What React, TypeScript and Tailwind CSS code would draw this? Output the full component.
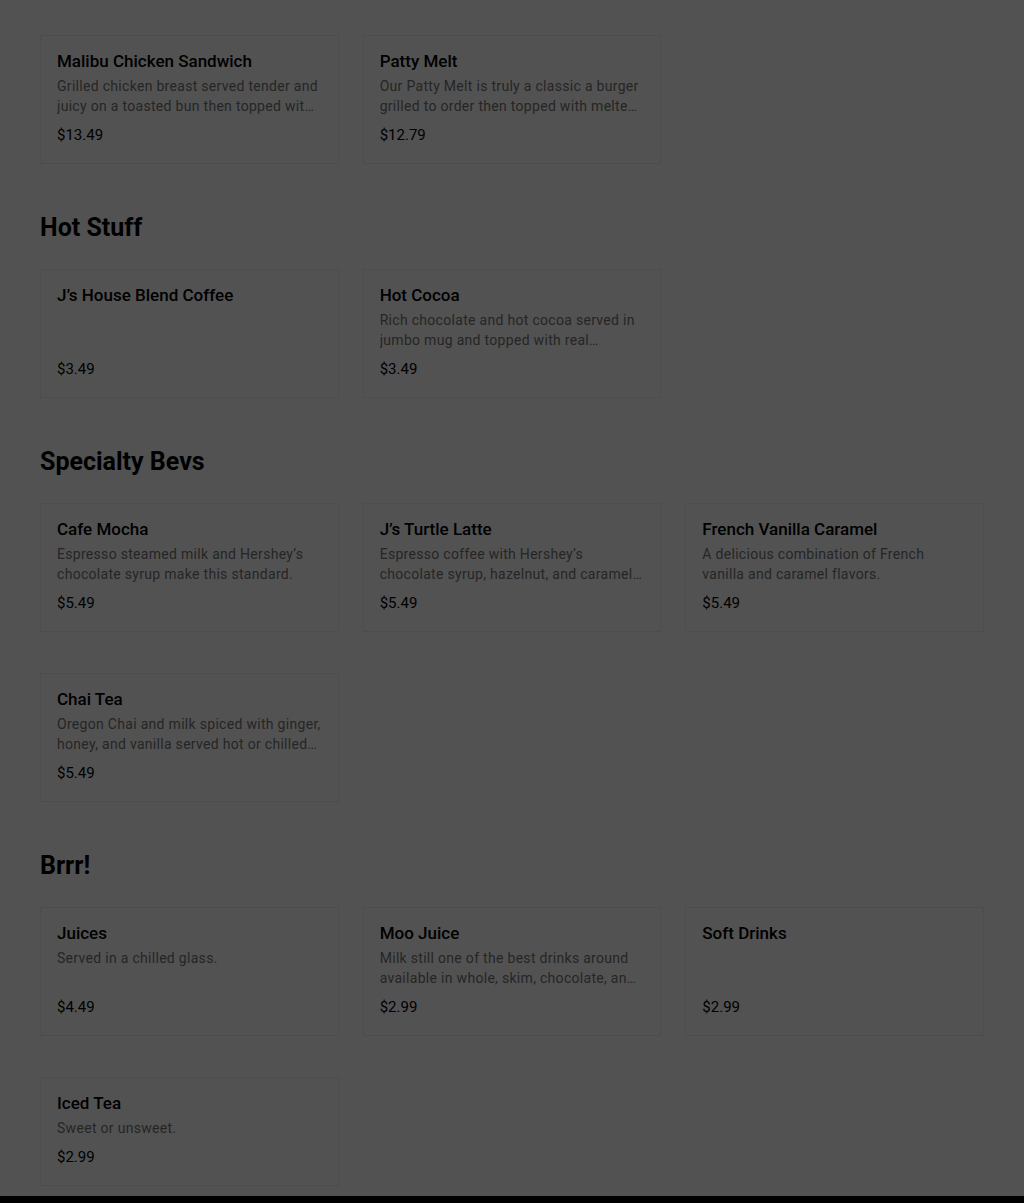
type Item = {
  name: string;
  desc?: string;
  price: string;
};

type Section = {
  title?: string;
  items: Item[];
};

const sections: Section[] = [
  {
    items: [
      {
        name: "Malibu Chicken Sandwich",
        desc: "Grilled chicken breast served tender and juicy on a toasted bun then topped with ham, Swiss cheese and our honey mustard.",
        price: "$13.49",
      },
      {
        name: "Patty Melt",
        desc: "Our Patty Melt is truly a classic a burger grilled to order then topped with melted Swiss cheese and grilled onions on rye.",
        price: "$12.79",
      },
    ],
  },
  {
    title: "Hot Stuff",
    items: [
      { name: "J’s House Blend Coffee", price: "$3.49" },
      {
        name: "Hot Cocoa",
        desc: "Rich chocolate and hot cocoa served in jumbo mug and topped with real whipped cream.",
        price: "$3.49",
      },
    ],
  },
  {
    title: "Specialty Bevs",
    items: [
      {
        name: "Cafe Mocha",
        desc: "Espresso steamed milk and Hershey’s chocolate syrup make this standard.",
        price: "$5.49",
      },
      {
        name: "J’s Turtle Latte",
        desc: "Espresso coffee with Hershey’s chocolate syrup, hazelnut, and caramel topped with whipped cream.",
        price: "$5.49",
      },
      {
        name: "French Vanilla Caramel",
        desc: "A delicious combination of French vanilla and caramel flavors.",
        price: "$5.49",
      },
      {
        name: "Chai Tea",
        desc: "Oregon Chai and milk spiced with ginger, honey, and vanilla served hot or chilled over ice.",
        price: "$5.49",
      },
    ],
  },
  {
    title: "Brrr!",
    items: [
      { name: "Juices", desc: "Served in a chilled glass.", price: "$4.49" },
      {
        name: "Moo Juice",
        desc: "Milk still one of the best drinks around available in whole, skim, chocolate, and strawberry.",
        price: "$2.99",
      },
      { name: "Soft Drinks", price: "$2.99" },
      { name: "Iced Tea", desc: "Sweet or unsweet.", price: "$2.99" },
    ],
  },
];

function MenuCard({ name, desc, price }: Item) {
  return (
    <button className="flex flex-col border border-[#eeeeee] bg-white px-4 pt-[13px] pb-[18px] text-left">
      <div className="text-[17px] font-medium leading-6 text-black">{name}</div>
      {desc && (
        <div className="mt-[3px] line-clamp-2 text-sm leading-5 tracking-[0.3px] text-[#757575]">
          {desc}
        </div>
      )}
      <div className="mt-auto pt-[9px] text-[15px] leading-5 text-black">{price}</div>
    </button>
  );
}

export default function App() {
  return (
    <div className="relative min-h-[1203px] bg-white font-['Roboto','Liberation_Sans',sans-serif]">
      <main className="px-10 pt-[35px] pb-[10px]">
        {sections.map((section, i) => (
          <section key={i} className={i > 0 ? "mt-12" : ""}>
            {section.title && (
              <h2 className="mb-[25px] text-[25px] font-bold leading-8 text-black">
                {section.title}
              </h2>
            )}
            <div className="grid grid-cols-3 gap-x-6 gap-y-[41px]">
              {section.items.map((item) => (
                <MenuCard key={item.name} {...item} />
              ))}
            </div>
          </section>
        ))}
      </main>
      <footer className="h-40 bg-black" />

      {/* modal backdrop */}
      <div className="fixed inset-0 bg-[rgba(0,0,0,0.68)]" />
    </div>
  );
}
